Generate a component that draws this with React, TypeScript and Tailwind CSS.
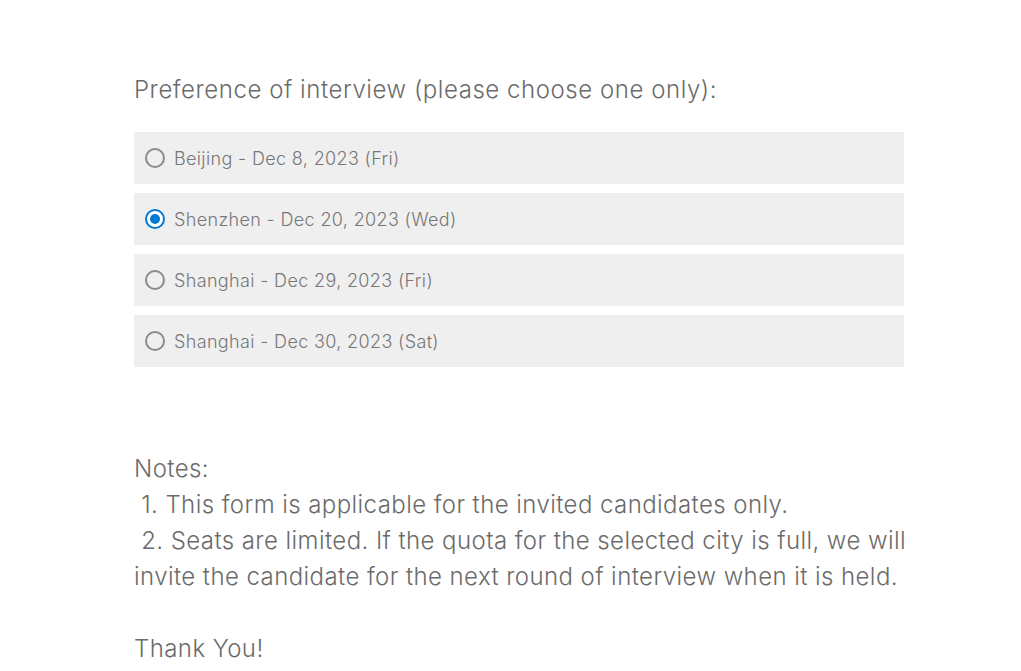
import { useState } from "react";

const options = [
  "Beijing - Dec 8, 2023 (Fri)",
  "Shenzhen - Dec 20, 2023 (Wed)",
  "Shanghai - Dec 29, 2023 (Fri)",
  "Shanghai - Dec 30, 2023 (Sat)",
];

export default function App() {
  const [picked, setPicked] = useState(1);

  return (
    <main className="min-h-[671px] bg-white font-['Inter',sans-serif] font-light text-[#6b6b6b]">
      <div className="ml-[134px] w-[770px] pt-[74px]">
        <div className="text-[24px] leading-[32px] tracking-[0.55px] text-[#6b6b6b]">
          Preference of interview (please choose one only):
        </div>

        <div className="mt-[26px] flex flex-col gap-[9px]">
          {options.map((o, i) => (
            <label
              key={o}
              className="flex h-[52px] cursor-pointer items-center gap-[9px] bg-[#efefef] pl-[11px]"
              onClick={() => setPicked(i)}
            >
              {picked === i ? (
                <span className="flex h-[20px] w-[20px] items-center justify-center rounded-full border-2 border-[#0078d4] bg-white">
                  <span className="h-[10px] w-[10px] rounded-full bg-[#0078d4]" />
                </span>
              ) : (
                <span className="h-[20px] w-[20px] rounded-full border-2 border-[#8a8a8a] bg-transparent" />
              )}
              <span className="text-[18px] tracking-[0.35px] text-[#777]">{o}</span>
            </label>
          ))}
        </div>

        <div className="mt-[84px] w-[800px] text-[24px] leading-[36px] tracking-[0.42px]">
          <div>Notes:</div>
          <div>&nbsp;1. This form is applicable for the invited candidates only.</div>
          <div>
            &nbsp;2. Seats are limited. If the quota for the selected city is full, we will invite
            the candidate for the next round of interview when it is held.
          </div>
          <div className="mt-[36px]">Thank You!</div>
        </div>
      </div>
    </main>
  );
}
